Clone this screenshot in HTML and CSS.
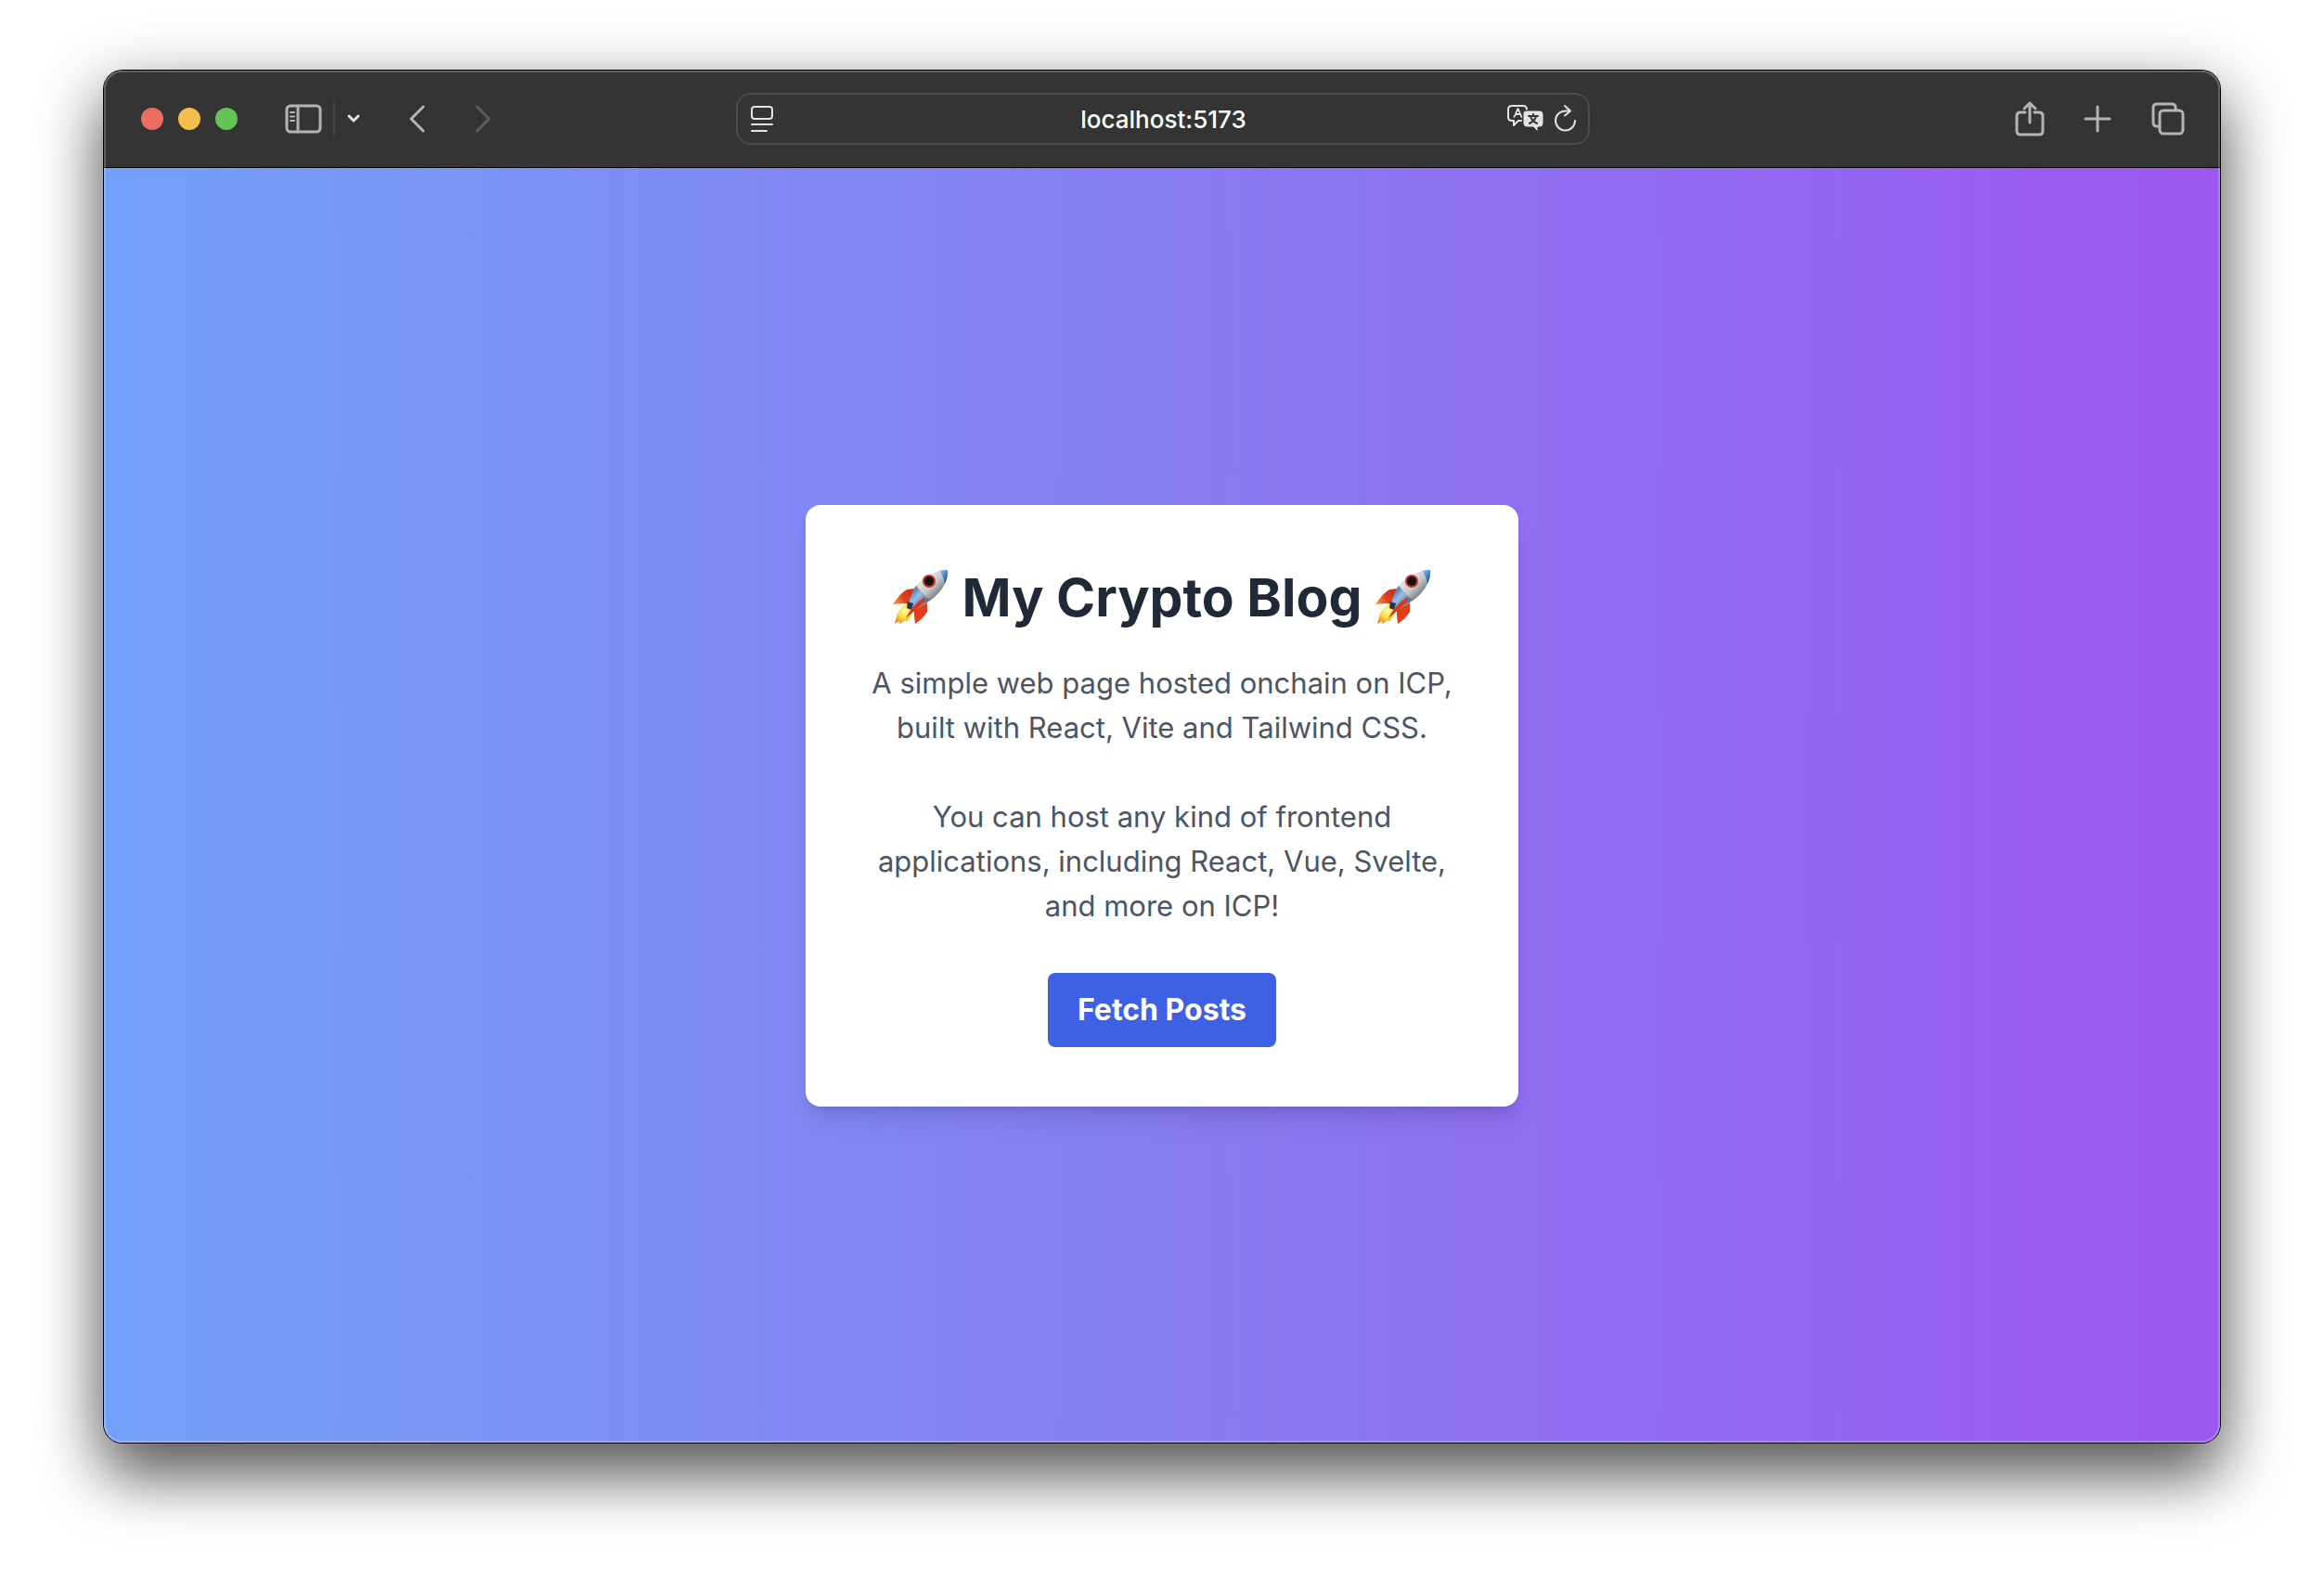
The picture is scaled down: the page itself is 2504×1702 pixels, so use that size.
FILE: index.html
```html
<!DOCTYPE html>
<html lang="en">
<head>
<meta charset="utf-8">
<title>My Crypto Blog</title>
<link rel="stylesheet" href="styles.css">
</head>
<body>
<svg class="defs" width="0" height="0" aria-hidden="true">
  <defs>
    <linearGradient id="hull" x1="22" y1="12" x2="46" y2="36" gradientUnits="userSpaceOnUse">
      <stop offset="0" stop-color="#6b86ae"/><stop offset=".25" stop-color="#dfe5ea"/><stop offset=".55" stop-color="#c3c8cb"/><stop offset="1" stop-color="#5d6468"/>
    </linearGradient>
    <linearGradient id="band" x1="20" y1="22" x2="38" y2="40" gradientUnits="userSpaceOnUse">
      <stop offset="0" stop-color="#3f68a5"/><stop offset=".4" stop-color="#9dc0ea"/><stop offset="1" stop-color="#29457d"/>
    </linearGradient>
    <linearGradient id="tip" x1="50" y1="2" x2="60" y2="12" gradientUnits="userSpaceOnUse">
      <stop offset="0" stop-color="#a9c8ee"/><stop offset=".5" stop-color="#4c83cf"/><stop offset="1" stop-color="#25488c"/>
    </linearGradient>
    <linearGradient id="fin" x1="2" y1="36" x2="24" y2="24" gradientUnits="userSpaceOnUse">
      <stop offset="0" stop-color="#f79a3a"/><stop offset=".5" stop-color="#e2401c"/><stop offset="1" stop-color="#c0301a"/>
    </linearGradient>
    <radialGradient id="flame" cx="14" cy="44" r="15" gradientUnits="userSpaceOnUse">
      <stop offset="0" stop-color="#fffbb0"/><stop offset=".5" stop-color="#fbdc3c"/><stop offset="1" stop-color="#f0801e"/>
    </radialGradient>
    <symbol id="rocket" viewBox="0 0 62 60">
      <path fill="url(#fin)" d="M26 20 16 21Q10 24 1 37l12-1 6 1z"/>
      <path fill="url(#flame)" d="M15 37Q6 43 5 50L3 58l5-3 0 3 7-4 1 2 5-7 3-6z"/>
      <path fill="#e23c1b" d="m38 35 0 10Q34 52 25 58l-1-9 0-6z"/>
      <path fill="url(#hull)" d="M18 37Q21 21 33 10 46 0 60 0 61 12 51 24 41 36 22 43z"/>
      <path fill="url(#band)" d="M18 37Q20 27 26 17q5 8 15 14-9 8-19 12z"/>
      <path fill="url(#tip)" d="M51 1q5-2 9-1 1 7-3 15-1-9-6-14z"/>
      <path fill="none" stroke="#d6a34a" d="M26 17q5 8 14 14"/>
      <circle cx="40" cy="12" r="7" fill="#c92f24"/>
      <circle cx="40" cy="12" r="5" fill="#131313"/>
      <path fill="#263451" d="m17 34 6 2-2 7-5-2z"/>
      <path fill="#d93a1d" d="M35 29q2 5-6 11l-14 12q5-12 20-23z"/>
    </symbol>
  </defs>
</svg>
<main class="window">
  <header class="toolbar">
    <div class="group">
      <div class="lights"><button class="light red" aria-label="Close"></button><button class="light yellow" aria-label="Minimize"></button><button class="light green" aria-label="Zoom"></button></div>
      <div class="sidebar">
        <button class="icon" aria-label="Sidebar"><svg width="40" height="32" viewBox="0 0 40 32"><rect x="2" y="2" width="36" height="28" rx="4"/><path d="M14 2v28"/><path stroke-width="2" d="M6 9h4M6 13.500h4M6 18h4"/></svg></button>
        <span class="divider"></span>
        <button class="icon bright" aria-label="Tab groups"><svg width="16" height="12" viewBox="0 0 16 12"><path stroke-width="3" d="m3 3 5 5 5-5"/></svg></button>
      </div>
      <div class="history">
        <button class="icon" aria-label="Back"><svg width="20" height="32" viewBox="0 0 20 32"><path d="M17 3 4 16l13 13"/></svg></button>
        <button class="icon" aria-label="Forward" disabled><svg width="20" height="32" viewBox="0 0 20 32"><path d="m3 3 13 13L3 29"/></svg></button>
      </div>
    </div>
    <div class="address">
      <button class="icon bright" aria-label="Page menu"><svg width="24" height="30" viewBox="0 0 24 30"><rect x="1" y="2" width="22" height="13" rx="3"/><path d="M1 21h22M1 28h16"/></svg></button>
      <input class="url" aria-label="Address" value="localhost:5173">
      <div class="tools">
        <button class="icon bright" aria-label="Translate"><svg width="40" height="30" viewBox="0 0 40 30"><path d="M15 17h-3l-5 5v-5H5q-4 0-4-4V5q0-4 4-4h12q4 0 4 4v2"/><path stroke-width="1.800" d="M7.500 13 11.500 4l4 9M9 10h5"/><path class="solid" d="M21 6h14q4 0 4 4v10q0 4-4 4h-2v5l-5-5h-7q-4 0-4-4V10q0-4 4-4z"/><path class="cut" d="M23 12h10M28 10v2M25 12q1 5 7 8M31 12q-1 5-7 8"/></svg></button>
        <button class="icon bright" aria-label="Reload"><svg width="24" height="30" viewBox="0 0 24 30"><path d="M22 17A10.500 10.500 0 1 1 12 6.500h5M11 1l6 5.500-6 5"/></svg></button>
      </div>
    </div>
    <div class="actions">
      <button class="icon" aria-label="Share"><svg width="30" height="38" viewBox="0 0 30 38"><path d="M10 12H5q-4 0-4 4v16q0 4 4 4h20q4 0 4-4V16q0-4-4-4h-5M15 23V2M9 8l6-6 6 6"/></svg></button>
      <button class="icon" aria-label="New tab"><svg width="28" height="28" viewBox="0 0 28 28"><path d="M14 1v26M1 14h26"/></svg></button>
      <button class="icon" aria-label="Tab overview"><svg width="36" height="36" viewBox="0 0 36 36"><rect x="9" y="9" width="25" height="25" rx="4"/><path d="M9 26H6q-4 0-4-4V6q0-4 4-4h16q4 0 4 4v3"/></svg></button>
    </div>
  </header>
  <section class="page">
    <article class="card">
      <h1 class="title"><svg class="rocket" role="img" aria-label="rocket"><use href="#rocket"/></svg><span>My Crypto Blog</span><svg class="rocket" role="img" aria-label="rocket"><use href="#rocket"/></svg></h1>
      <p class="text">A simple web page hosted onchain on ICP, built with React, Vite and Tailwind CSS.<br><br>You can host any kind of frontend applications, including React, Vue, Svelte, and more on ICP!</p>
      <button class="fetch">Fetch Posts</button>
    </article>
  </section>
</main>
</body>
</html>
```
FILE: styles.css
```css
* { box-sizing: border-box; }
body {
  margin: 0;
  min-height: 100vh;
  padding: 76px 112px 148px;
  display: flex;
  background: #fff;
  font-family: Inter, "Liberation Sans", sans-serif;
}
button, input { font: inherit; border: 0; padding: 0; background: none; color: inherit; }
.defs { position: absolute; }
.window {
  flex: 1;
  min-width: 0;
  display: flex;
  flex-direction: column;
  position: relative;
  border-radius: 20px;
  overflow: hidden;
  box-shadow: 0 0 0 1px #000, 0 38px 64px rgba(0, 0, 0, .5), 0 16px 76px rgba(0, 0, 0, .32);
}
/* light inner rim that runs round the whole window */
.window::after {
  content: "";
  position: absolute;
  inset: 0;
  border-radius: 20px;
  border: 2px solid rgba(255, 255, 255, .22);
  pointer-events: none;
}
.toolbar {
  display: grid;
  grid-template-columns: 1fr minmax(0, 920px) 1fr;
  align-items: center;
  height: 105px;
  padding: 0 38px 0 40px;
  background: #343434;
  border-bottom: 1px solid #000;
}
.group, .lights, .sidebar, .history, .actions, .tools, .address { display: flex; align-items: center; }
.lights { gap: 16px; }
.light { width: 24px; height: 24px; border-radius: 50%; }
.red { background: #ec6d5f; }
.yellow { background: #f4be4c; }
.green { background: #62c554; }
.sidebar { margin-left: 51px; gap: 12px; }
.divider { width: 2px; height: 36px; background: #484848; }
.history { margin-left: 50px; gap: 52px; }
.icon { display: flex; color: #b4b4b4; }
.icon:disabled { color: #5c5c5c; }
.bright { color: #e2e2e2; }
.icon svg { fill: none; stroke: currentColor; stroke-width: 3; stroke-linecap: round; stroke-linejoin: round; overflow: visible; }
.bright svg { stroke-width: 2; }
.icon .solid { fill: currentColor; stroke: #343434; stroke-width: 1; }
.icon .cut { stroke: #343434; stroke-width: 2; }
.address {
  height: 56px;
  padding: 0 12px 0 14px;
  border: 2px solid #4b4b4b;
  border-radius: 16px;
  color: #fff;
  justify-content: space-between;
}
.address > .icon { width: 74px; }
.url { flex: 1; min-width: 0; text-align: center; font-size: 26px; font-weight: 500; outline: 0; }
.tools { gap: 11px; }
.actions { justify-content: flex-end; gap: 44px; }
.page {
  flex: 1;
  display: flex;
  align-items: center;
  justify-content: center;
  background: linear-gradient(to right, #73a1f8, #9d57f0);
}
.card {
  width: 768px;
  max-width: 100%;
  padding: 64px;
  border-radius: 16px;
  background: #fff;
  text-align: center;
  box-shadow: 0 20px 30px -6px rgba(0, 0, 0, .1), 0 8px 12px -4px rgba(0, 0, 0, .1);
}
.title {
  margin: 0 0 32px;
  display: flex;
  align-items: center;
  justify-content: center;
  gap: 14px;
  color: #1f2937;
  font-size: 57px;
  line-height: 72px;
  font-weight: 700;
  white-space: nowrap;
}
.rocket { width: 62px; height: 60px; flex: none; }
.text { margin: 0 0 48px; color: #4b5563; font-size: 31px; line-height: 48px; }
.fetch {
  padding: 16px 32px;
  border-radius: 8px;
  background: #3e60e5;
  color: #fff;
  font-size: 32px;
  line-height: 48px;
  font-weight: 700;
}
```
